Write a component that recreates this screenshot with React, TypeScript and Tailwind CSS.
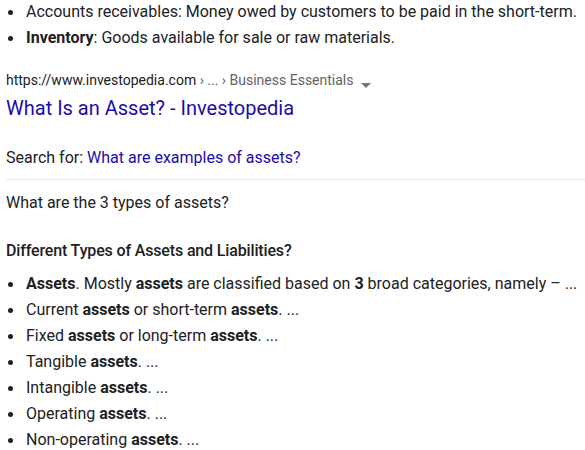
const items: { parts: [string, boolean][] }[] = [
  { parts: [["Assets", true], [". Mostly ", false], ["assets", true], [" are classified based on ", false], ["3", true], [" broad categories, namely – ...", false]] },
  { parts: [["Current ", false], ["assets", true], [" or short-term ", false], ["assets", true], [". ...", false]] },
  { parts: [["Fixed ", false], ["assets", true], [" or long-term ", false], ["assets", true], [". ...", false]] },
  { parts: [["Tangible ", false], ["assets", true], [". ...", false]] },
  { parts: [["Intangible ", false], ["assets", true], [". ...", false]] },
  { parts: [["Operating ", false], ["assets", true], [". ...", false]] },
  { parts: [["Non-operating ", false], ["assets", true], [". ...", false]] },
];

function Bullet({ children }: { children: React.ReactNode }) {
  return (
    <li className="flex h-[26px] items-center">
      <span className="w-[20px] shrink-0 pl-[2px]">
        <span className="block h-[5px] w-[5px] rounded-full bg-[#202124]" />
      </span>
      <span className="whitespace-nowrap">{children}</span>
    </li>
  );
}

export default function App() {
  return (
    <div className="h-[450px] w-[585px] overflow-hidden bg-white pl-[6px] text-[16px] text-[#202124] [font-family:Roboto,'Liberation_Sans',sans-serif]">
      <ul className="mt-[-1px]">
        <Bullet>Accounts receivables: Money owed by customers to be paid in the short-term.</Bullet>
        <Bullet>
          <b className="font-bold">Inventory</b>: Goods available for sale or raw materials.
        </Bullet>
      </ul>

      <div className="mt-[19px] flex h-[20px] items-center text-[14px]">
        <span>https://www.investopedia.com</span>
        <span className="text-[#5f6368]">&nbsp;› ... › Business Essentials</span>
        <svg className="ml-[7px] mt-[10px]" width="10" height="5" viewBox="0 0 10 5">
          <path d="M0 0 L10 0 L5 5 Z" fill="#70757a" />
        </svg>
      </div>
      <div className="mt-[5px] h-[26px] text-[20px] leading-[26px] text-[#1a0dab]">What Is an Asset? - Investopedia</div>

      <div className="mt-[25px] h-[24px] leading-[24px]">
        Search for: <span className="text-[#1a0dab]">What are examples of assets?</span>
      </div>
      <div className="mt-[9px] h-px bg-[#ebebeb]" />

      <div className="mt-[11px] h-[24px] leading-[24px]">What are the 3 types of assets?</div>

      <div className="mt-[24px] h-[24px] font-medium leading-[24px] tracking-[-0.15px]">Different Types of Assets and Liabilities?</div>

      <ul className="mt-[8px]">
        {items.map((it, i) => (
          <Bullet key={i}>
            {it.parts.map(([t, b], j) =>
              b ? (
                <b key={j} className="font-bold">
                  {t}
                </b>
              ) : (
                <span key={j}>{t}</span>
              )
            )}
          </Bullet>
        ))}
      </ul>
    </div>
  );
}
